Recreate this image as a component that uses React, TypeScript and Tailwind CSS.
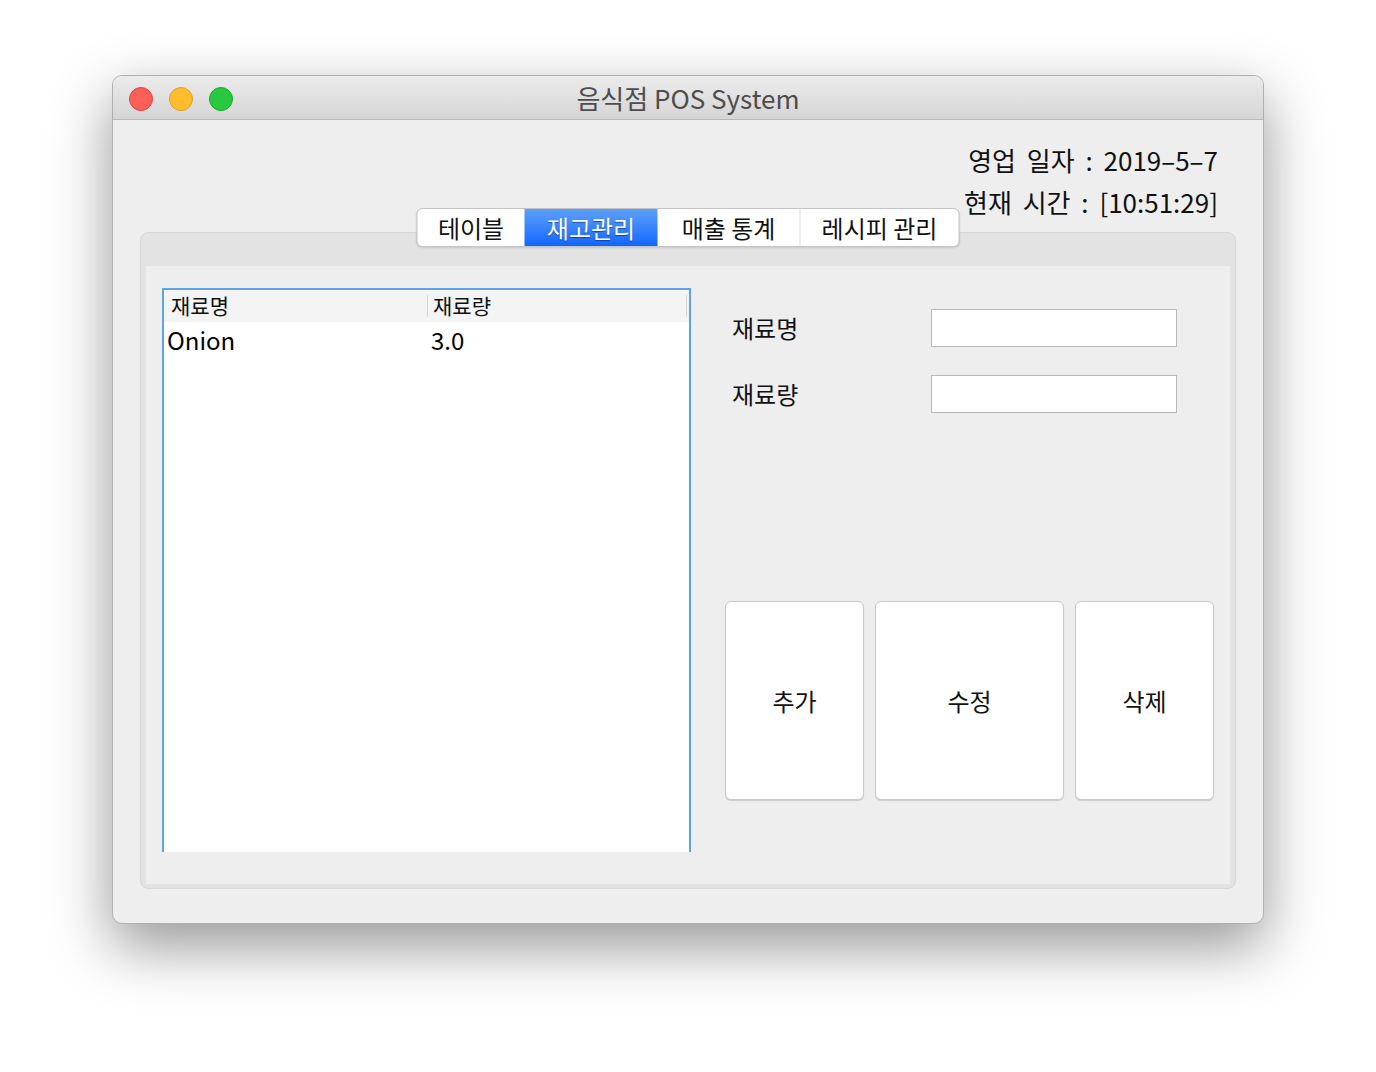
const FONT = "font-['Noto_Sans_CJK_KR','Noto_Sans',sans-serif]";

const TABS = ["테이블", "재고관리", "매출 통계", "레시피 관리"];
const TAB_W = ["w-[107px]", "w-[133px]", "w-[142px]", "w-[159px]"];

const ROWS = [{ name: "Onion", qty: "3.0" }];

const TrafficLights = () => (
  <div className="absolute left-[16px] top-[11px] flex gap-[16px]">
    <span className="w-[24px] h-[24px] rounded-full bg-[#fe5f57] border border-[#e0443e]" />
    <span className="w-[24px] h-[24px] rounded-full bg-[#febc2e] border border-[#dea123]" />
    <span className="w-[24px] h-[24px] rounded-full bg-[#28c840] border border-[#1aab29]" />
  </div>
);

const TabBar = () => (
  <div className="absolute left-1/2 -translate-x-1/2 -top-[25px] flex h-[39px] rounded-[6px] border border-[#c4c4c4] bg-white shadow-[0_1px_2px_rgba(0,0,0,0.12)] overflow-hidden">
    {TABS.map((t, i) => {
      const active = i === 1;
      return (
        <div
          key={t}
          className={`${TAB_W[i]} flex items-center justify-center text-[24px] ${
            active
              ? "bg-gradient-to-b from-[#5c9ffb] to-[#0f66fb] text-white [text-shadow:0_1px_1px_rgba(0,0,60,0.45)]"
              : "text-[#111]"
          } ${i === 3 ? "border-l border-[#dedede]" : ""}`}
        >
          {t}
        </div>
      );
    })}
  </div>
);

const InventoryTable = () => (
  <div className="w-[529px] h-[564px] border-2 border-b-0 border-[#5ba4e6] bg-white">
    <div className="flex h-[32px] bg-[#f4f4f4] text-[21px] text-[#111]">
      <div className="w-[263px] flex items-center pl-[7px]">재료명</div>
      <div className="w-[260px] flex items-center pl-[5px] border-l border-[#d6d6d6] my-[5px] border-r">재료량</div>
    </div>
    {ROWS.map((r) => (
      <div key={r.name} className="flex h-[36px] text-[24px] text-black">
        <div className="w-[263px] flex items-center pl-[3px]">{r.name}</div>
        <div className="flex items-center pl-[4px]">{r.qty}</div>
      </div>
    ))}
  </div>
);

const Field = ({ label }: { label: string }) => (
  <div className="flex items-center h-[38px]">
    <div className="w-[206px] pl-[7px] text-[24px] text-[#111]">{label}</div>
    <div className="w-[246px] h-[38px] bg-white border border-[#b9b9b9]" />
  </div>
);

const ActionButton = ({ label, w }: { label: string; w: string }) => (
  <button
    className={`${w} h-[199px] flex items-center justify-center bg-white rounded-[6px] border border-[#c9c9c9] shadow-[0_1px_1px_rgba(0,0,0,0.15)] text-[24px] text-[#111]`}
  >
    {label}
  </button>
);

export default function App() {
  return (
    <div className={`min-h-[1072px] bg-white pt-[75px] ${FONT}`}>
      <div className="mx-auto w-[1152px] h-[849px] rounded-[10px] overflow-hidden bg-[#eeeeee] border border-[#b0b0b0] shadow-[0_22px_60px_rgba(0,0,0,0.42)] flex flex-col">
        <div className="relative h-[44px] shrink-0 bg-gradient-to-b from-[#ececec] to-[#d5d5d5] border-b border-[#b8b8b8] flex items-center justify-center">
          <TrafficLights />
          <span className="text-[26px] text-[#4d4d4d]">음식점 POS System</span>
        </div>

        <div className="flex-1 flex flex-col px-[27px] pb-[34px]">
          <div className="self-end mr-[18px] mt-[19px] text-right text-[26px] leading-[42px] [word-spacing:5px] text-[#111]">
            <div>영업 일자 : 2019–5–7</div>
            <div>현재 시간 : [10:51:29]</div>
          </div>

          <div className="relative mt-[9px] flex-1 rounded-[8px] border border-[#d8d8d8] bg-[#e3e3e3] pt-[33px] px-[5px] pb-[4px] flex">
            <TabBar />
            <div className="flex-1 bg-[#eeeeee] flex pl-[16px] pt-[22px]">
              <InventoryTable />
              <div className="ml-[34px] flex flex-col">
                <div className="mt-[21px] flex flex-col gap-[28px]">
                  <Field label="재료명" />
                  <Field label="재료량" />
                </div>
                <div className="mt-[188px] flex gap-[11px]">
                  <ActionButton label="추가" w="w-[139px]" />
                  <ActionButton label="수정" w="w-[189px]" />
                  <ActionButton label="삭제" w="w-[139px]" />
                </div>
              </div>
            </div>
          </div>
        </div>
      </div>
    </div>
  );
}
